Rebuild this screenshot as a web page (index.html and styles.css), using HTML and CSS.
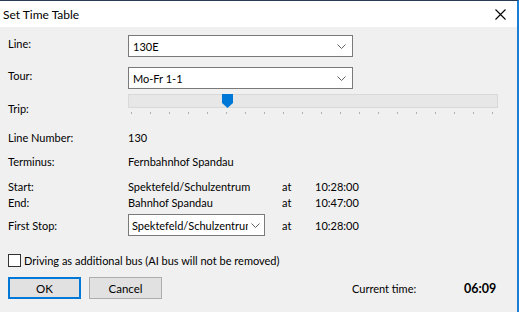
FILE: index.html
```html
<!DOCTYPE html>
<html lang="en">
<head>
  <meta charset="UTF-8" />
  <title>Set Time Table</title>
  <link rel="stylesheet" href="styles.css">
</head>
<body>

  <div class="window">
    <div class="titlebar">
      <div class="title">Set Time Table</div>
      <div class="close">
        <svg width="11" height="11" viewBox="0 0 11 11"><path d="M0.5 0.5 L10.5 10.5 M10.5 0.5 L0.5 10.5" stroke="#000" stroke-width="1.1" fill="none"/></svg>
      </div>
    </div>

    <div class="content">
      <div class="row row-line combo-row">
        <div class="label">Line:</div>
        <div class="combo combo-wide">
          <span>130E</span>
          <svg class="chev" width="9" height="5" viewBox="0 0 9 5"><path d="M0.5 0.5 L4.5 4.5 L8.5 0.5" stroke="#606060" fill="none"/></svg>
        </div>
      </div>

      <div class="row row-tour combo-row">
        <div class="label">Tour:</div>
        <div class="combo combo-wide">
          <span>Mo-Fr 1-1</span>
          <svg class="chev" width="9" height="5" viewBox="0 0 9 5"><path d="M0.5 0.5 L4.5 4.5 L8.5 0.5" stroke="#606060" fill="none"/></svg>
        </div>
      </div>

      <div class="row row-trip">
        <div class="label">Trip:</div>
        <div class="slider">
          <div class="track">
            <svg class="thumb" width="11" height="14" viewBox="0 0 11 14"><path d="M0 0 H11 V9 L5.5 14 L0 9 Z" fill="#0078d7"/></svg>
          </div>
          <div class="ticks"></div>
        </div>
      </div>

      <div class="row row-info first">
        <div class="label">Line Number:</div>
        <div class="value">130</div>
      </div>

      <div class="row row-info">
        <div class="label">Terminus:</div>
        <div class="value">Fernbahnhof Spandau</div>
      </div>

      <div class="row row-stop first">
        <div class="label">Start:</div>
        <div class="value stop">Spektefeld/Schulzentrum</div>
        <div class="at">at</div>
        <div class="time">10:28:00</div>
      </div>

      <div class="row row-stop">
        <div class="label">End:</div>
        <div class="value stop">Bahnhof Spandau</div>
        <div class="at">at</div>
        <div class="time">10:47:00</div>
      </div>

      <div class="row row-first-stop">
        <div class="label">First Stop:</div>
        <div class="combo combo-small">
          <span>Spektefeld/Schulzentrum</span>
          <svg class="chev" width="9" height="5" viewBox="0 0 9 5"><path d="M0.5 0.5 L4.5 4.5 L8.5 0.5" stroke="#606060" fill="none"/></svg>
        </div>
        <div class="at">at</div>
        <div class="time">10:28:00</div>
      </div>

      <label class="row check-row">
        <span class="checkbox"></span>
        <span>Driving as additional bus (AI bus will not be removed)</span>
      </label>

      <div class="row button-row">
        <button class="btn btn-default">OK</button>
        <button class="btn">Cancel</button>
        <div class="current-label">Current time:</div>
        <div class="current-time">06:09</div>
      </div>
    </div>
  </div>

</body>
</html>
```

FILE: styles.css
```css
* { margin: 0; padding: 0; box-sizing: border-box; }

body {
  font-family: Lato, "Noto Sans", sans-serif;
  font-size: 11px;
  color: #000;
  background: #f0f0f0;
}

.window {
  width: 519px;
  height: 312px;
  background: #f0f0f0;
  border-top: 1px solid #2a3b55;
  border-right: 2px solid #1a7fd4;
  overflow: hidden;
}

.titlebar {
  height: 26px;
  background: #fff;
  display: flex;
  align-items: center;
  justify-content: space-between;
  padding: 0 11px 0 3px;
}

.title {
  font-size: 12px;
}

.close {
  display: flex;
  align-items: center;
}

.content {
  padding: 0 0 0 8px;
  display: flex;
  flex-direction: column;
}

.row {
  display: flex;
  align-items: center;
}

.label {
  width: 120px;
  flex-shrink: 0;
}

.combo-row {
  align-items: flex-start;
}

.combo-row .label {
  padding-top: 2px;
}

.combo {
  height: 22px;
  background: #fff;
  border: 1px solid #7a7a7a;
  display: flex;
  align-items: center;
  justify-content: space-between;
  padding: 0 6px 0 4px;
  white-space: nowrap;
  overflow: hidden;
}

.combo span {
  overflow: hidden;
}

.combo-wide {
  width: 225px;
}

.combo-small {
  width: 137px;
  padding-left: 3px;
  padding-right: 4px;
}

.chev {
  flex-shrink: 0;
  margin-left: 3px;
}

.row-line { margin-top: 8px; }
.row-tour { margin-top: 10px; }

.row-trip {
  margin-top: 5px;
  align-items: flex-start;
}

.row-trip .label {
  padding-top: 8px;
  height: 20px;
}

.slider {
  width: 370px;
}

.track {
  position: relative;
  height: 14px;
  background: #e7e7e7;
  border: 1px solid #d9d9d9;
}

.thumb {
  position: absolute;
  left: 93px;
  top: -1px;
}

.ticks {
  margin-top: 4px;
  height: 2px;
  width: 368px;
  background: repeating-linear-gradient(to right, #b0b0b0 0 1px, transparent 1px 19px);
  background-position: 3px 0;
}

.row-info {
  height: 20px;
  margin-top: 4px;
}

.row-info.first { margin-top: 13px; }

.row-stop {
  height: 16px;
}

.row-stop.first { margin-top: 7px; }

.stop {
  width: 154px;
}

.value.stop, .combo-small {
  flex-shrink: 0;
}

.combo-small {
  margin-right: 17px;
}

.at {
  width: 33px;
}

.row-first-stop {
  margin-top: 4px;
}

.check-row {
  margin-top: 17px;
  height: 14px;
}

.checkbox {
  width: 13px;
  height: 13px;
  background: #fff;
  border: 1px solid #333;
  margin-right: 3px;
}

.button-row {
  margin-top: 10px;
}

.btn {
  width: 73px;
  height: 22px;
  font-family: inherit;
  font-size: 11.5px;
  background: #e1e1e1;
  border: 1px solid #adadad;
  color: #000;
  margin-right: 8px;
}

.btn-default {
  border: 2px solid #0078d7;
}

.current-label {
  margin-left: 182px;
  width: 112px;
}

.current-time {
  font-weight: bold;
  font-size: 12.5px;
}
```
